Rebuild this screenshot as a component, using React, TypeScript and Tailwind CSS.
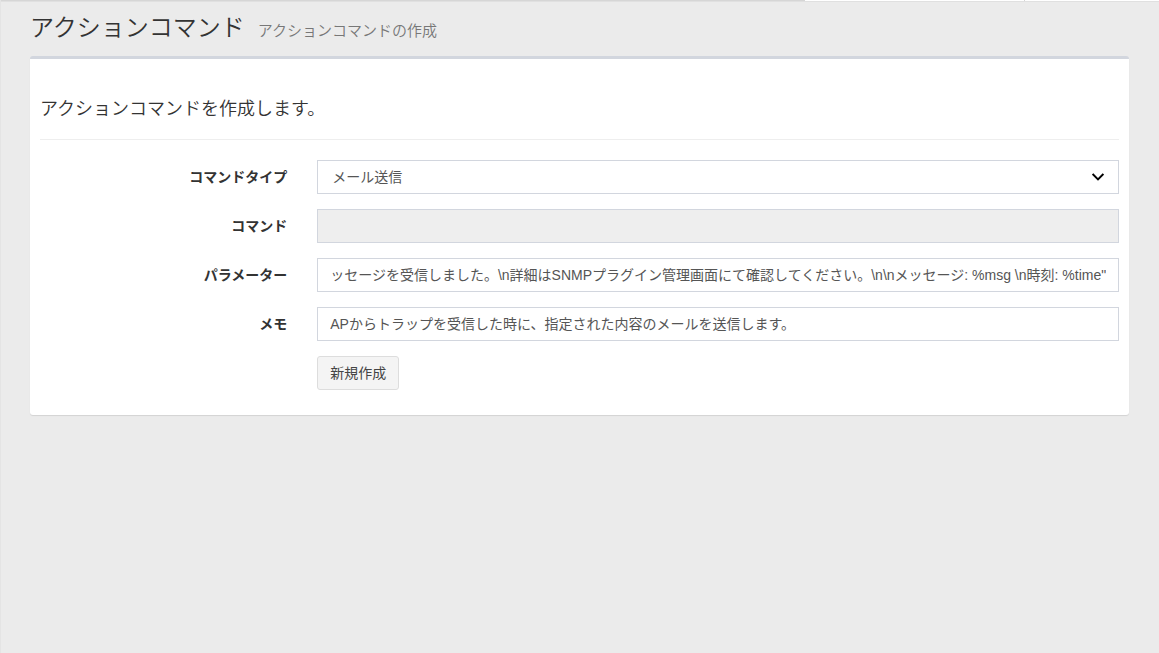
import { useEffect, useRef } from "react";
import type { ReactNode } from "react";

const CONTROL =
  "block w-full h-[34px] border border-[#d2d6de] text-sm text-[#555] outline-none";

const PARAMETER =
  '"メッセージを受信しました。\\n詳細はSNMPプラグイン管理画面にて確認してください。\\n\\nメッセージ: %msg \\n時刻: %time"';

interface FieldProps {
  id: string;
  label: string;
  children: ReactNode;
}

function Field({ id, label, children }: FieldProps) {
  return (
    <div className="grid grid-cols-4 gap-x-[30px] mb-[15px]">
      <label htmlFor={id} className="pt-[7px] text-sm leading-5 font-bold text-right">
        {label}
      </label>
      <div className="col-span-3">{children}</div>
    </div>
  );
}

export default function App() {
  const parameterRef = useRef<HTMLInputElement>(null);

  // Keep the end of the long default parameter in view
  useEffect(() => {
    const input = parameterRef.current;
    if (input) input.scrollLeft = input.scrollWidth;
  }, []);

  return (
    <div className="min-h-screen bg-[#ebebeb] border-l border-[#e4e4e4] text-[#333] font-['Liberation_Sans','Noto_Sans_CJK_JP',sans-serif]">
      <div className="flex h-0.5 border-b border-[#e0e0e0]">
        <div className="w-[69.4%] bg-[#d6d6d6]"></div>
        <div className="w-[19%] bg-white border-r border-[#d6d6d6]"></div>
        <div className="flex-1 bg-white"></div>
      </div>

      <header className="flex items-baseline gap-[13px] pl-[29px] pr-[30px] pt-[13px]">
        <h1 className="text-2xl leading-[26px] font-[350]">アクションコマンド</h1>
        <small className="text-[15px] leading-4 font-[350] text-[#777]">アクションコマンドの作成</small>
      </header>

      <main className="pl-[29px] pr-[30px] pt-[15px]">
        <section className="bg-white rounded-[3px] border-t-[3px] border-[#d2d6de] shadow-[0_1px_1px_rgba(0,0,0,0.1)] p-[10px]">
          <h2 className="mt-[30px] pb-5 text-lg leading-5 font-[350] border-b border-[#eee]">
            アクションコマンドを作成します。
          </h2>

          <form className="pt-5" onSubmit={(e) => e.preventDefault()}>
            <Field id="type" label="コマンドタイプ">
              <div className="relative">
                <select id="type" defaultValue="mail" className={`${CONTROL} appearance-none bg-white pl-[14px] pr-8`}>
                  <option value="mail">メール送信</option>
                </select>
                <svg
                  viewBox="0 0 12 8"
                  className="absolute right-[15px] top-[13px] w-3 h-2 pointer-events-none"
                  fill="none"
                  stroke="#000"
                  strokeWidth="2"
                >
                  <path d="M0.6 1 L6 6.4 L11.4 1" />
                </svg>
              </div>
            </Field>
            <Field id="command" label="コマンド">
              <input id="command" type="text" disabled className={`${CONTROL} px-3 bg-[#eee]`} />
            </Field>
            <Field id="parameter" label="パラメーター">
              <input
                id="parameter"
                ref={parameterRef}
                type="text"
                defaultValue={PARAMETER}
                className={`${CONTROL} px-3 pb-0.5 bg-white`}
              />
            </Field>
            <Field id="memo" label="メモ">
              <input
                id="memo"
                type="text"
                defaultValue="APからトラップを受信した時に、指定された内容のメールを送信します。"
                className={`${CONTROL} px-3 pb-0.5 bg-white`}
              />
            </Field>
            <div className="grid grid-cols-4 gap-x-[30px] mb-[15px]">
              <div className="col-start-2 col-span-3">
                <button
                  type="submit"
                  className="block h-[34px] px-3 text-sm text-[#444] bg-[#f4f4f4] border border-[#ddd] rounded-[3px]"
                >
                  新規作成
                </button>
              </div>
            </div>
          </form>
        </section>
      </main>
    </div>
  );
}
